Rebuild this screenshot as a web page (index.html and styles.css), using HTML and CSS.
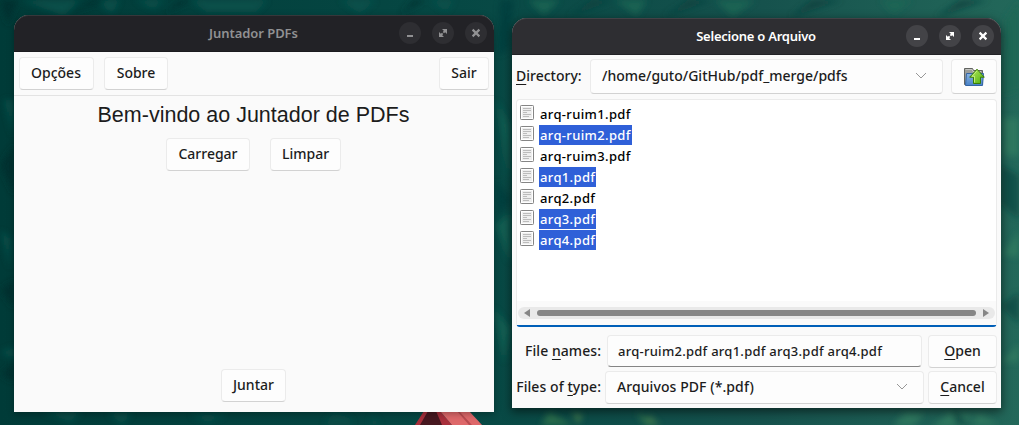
FILE: index.html
```html
<!DOCTYPE html>
<html lang="pt-BR">
<head>
<meta charset="utf-8">
<title>Juntador PDFs</title>
<link rel="stylesheet" href="styles.css">
</head>
<body>
<svg class="symbols" width="0" height="0">
  <defs>
    <linearGradient id="g-folder" x1="0" y1="0" x2="0" y2="1"><stop offset="0" stop-color="#88b3e2"/><stop offset="1" stop-color="#4a83c8"/></linearGradient>
    <linearGradient id="g-arrow" x1="0" y1="0" x2="1" y2="1"><stop offset="0" stop-color="#b6ec61"/><stop offset="1" stop-color="#4fae0b"/></linearGradient>
    <symbol id="min" viewBox="0 0 22 22"><path d="M8 13h6v2H8z" fill="currentColor"/></symbol>
    <symbol id="max" viewBox="0 0 22 22"><path d="M10 7h5v5l-1.800-1.800L12 11.200 10.800 10 11.800 8.800zM7 10v5h5l-1.800-1.800L11.200 12 10 10.800 8.800 11.800z" fill="currentColor"/></symbol>
    <symbol id="close" viewBox="0 0 22 22"><path d="M7.600 7.600l6.800 6.800M14.400 7.600l-6.800 6.800" stroke="currentColor" stroke-width="2.200"/></symbol>
    <symbol id="doc" viewBox="0 0 14 15"><rect x=".5" y=".5" width="13" height="14" rx=".8" fill="#fff" stroke="#858585"/><rect x="2" y="2" width="10" height="11" fill="#eee"/><path d="M3 3.500h8M3 5.500h8M3 7.500h4M3 9.500h8M3 11.500h6" stroke="#bcbcbc"/></symbol>
    <symbol id="chev" viewBox="0 0 12 7"><path d="M1 1l5 5 5-5" fill="none" stroke="#979797"/></symbol>
  </defs>
</svg>
<svg class="wallpaper" viewBox="0 0 1019 425" preserveAspectRatio="none">
  <defs>
    <linearGradient id="base"><stop offset="0" stop-color="#003b38"/><stop offset=".45" stop-color="#064844"/><stop offset=".75" stop-color="#16524d"/><stop offset="1" stop-color="#23685a"/></linearGradient>
    <filter id="soft" x="-5%" y="-5%" width="110%" height="110%"><feGaussianBlur stdDeviation="3"/></filter>
  </defs>
  <rect width="1019" height="425" fill="url(#base)"/>
  <g filter="url(#soft)" opacity=".8">
    <path fill="#08534d" d="M20 0h60L64 16zM96 0h24l-8 14zM135 0h30l-12 9zM190 0h78l-12 12h-50zM340 0h36l-16 14zM430 0h24l-8 12z"/>
    <path fill="#002f2d" d="M0 0h18L8 25zM68 14L92 0h16zM164 14l16-14h12zM400 14l14-14h12zM0 165l14-20v50zM0 290l14-10v28zM0 374l14-12v20z"/>
    <path fill="#07534d" d="M4 100h9v36zM0 230l10 8v30zM0 352l14-5v12zM42 412h40l-12 10zM108 413h24l-10 12zM190 415h36l-18 8z"/>
    <path fill="#126556" d="M497 100l12 25v60zM496 225l14-12v50zM494 308l16 20-6 35z"/>
    <path fill="#033d3c" d="M500 0h14l-6 50-10 5zM496 180l15 20-12 16z"/>
    <path fill="#1e6754" d="M528 0h32l-16 15zM615 0h32l-10 16zM715 0h40l-22 17zM880 0h32l-18 14zM1005 20l14-20v90l-16 6z"/>
    <path fill="#0c403e" d="M568 17l24-17h22zM664 17l24-17h24zM790 17l22-17h30zM936 17l24-17h28z"/>
    <path fill="#317b60" d="M1002 118h17v38h-15zM1002 255l17-24v26zM1001 362l18-18v18zM905 412l20 2-12 12h-20zM950 412l24 3-12 12h-30zM978 412l20 13h-25z"/>
    <path fill="#104b45" d="M1001 165l18 10v45l-18-16zM1001 306l18-14v32zM952 407l18 18h-14z"/>
    <path fill="#33764e" d="M549 412l24 13h-32zM636 412l26 13h-18z"/>
    <path fill="#49804d" d="M572 412l11 3-5 10zM649 414l10 11h-12z"/>
    <path fill="#075049" d="M332 414c16 0 25 8 18 11h-26zM372 413l9 12h-10z"/>
  </g>
  <path fill="#a82f3b" d="M424 411h16l12 14h-37z"/>
  <path fill="#471820" d="M428 411h8l6 14h-22z"/>
  <path fill="#de686a" d="M440 411h29l13 14h-30z"/>
  <path fill="#b94b50" d="M457 411h2l13 14h-3z"/>
</svg>

<section class="window merger">
  <header class="titlebar"><h1 class="caption cap-a">Juntador PDFs</h1>
    <div class="controls"><svg class="ctl"><use href="#min"/></svg><svg class="ctl"><use href="#max"/></svg><svg class="ctl"><use href="#close"/></svg></div>
  </header>
  <nav class="toolbar"><button class="btn b-op">Opções</button><button class="btn b-so">Sobre</button><button class="btn b-sa">Sair</button></nav>
  <main class="merger-body">
    <h2 class="welcome">Bem-vindo ao Juntador de PDFs</h2>
    <div class="actions"><button class="btn b-ca">Carregar</button><button class="btn b-li">Limpar</button></div>
    <button class="btn b-ju">Juntar</button>
  </main>
</section>

<section class="window dialog">
  <header class="titlebar"><h1 class="caption cap-b">Selecione o Arquivo</h1>
    <div class="controls"><svg class="ctl"><use href="#min"/></svg><svg class="ctl"><use href="#max"/></svg><svg class="ctl"><use href="#close"/></svg></div>
  </header>
  <div class="dialog-body">
    <div class="dir-row">
      <label class="lab"><u>D</u>irectory:</label>
      <div class="box combo"><span class="t-path">/home/guto/GitHub/pdf_merge/pdfs</span><svg class="chev"><use href="#chev"/></svg></div>
      <button class="btn up"><svg width="22" height="20" viewBox="0 0 22 20">
        <path d="M1.500 17.500V1.500h8l1 2h9v14z" fill="#9b9d99" stroke="#626461"/>
        <path d="M2.500 2.500h6.500l1 2h8" fill="none" stroke="#c5c6c3"/>
        <path d="M3.500 6.500h17l-1 12H2.500z" fill="url(#g-folder)" stroke="#3465a4"/>
        <path d="M14 2.200l7.300 8h-3.800v6.300h-7v-6.300H6.700z" fill="url(#g-arrow)" stroke="#387c05"/>
        <path d="M14 3.900l-5 5.400h2.500v6.200" fill="none" stroke="#d1f58e" stroke-width=".8"/>
      </svg></button>
    </div>
    <div class="list">
      <ul class="files">
        <li><svg class="doc"><use href="#doc"/></svg><span>arq-ruim1.pdf</span></li>
        <li><svg class="doc"><use href="#doc"/></svg><span class="sel">arq-ruim2.pdf</span></li>
        <li><svg class="doc"><use href="#doc"/></svg><span>arq-ruim3.pdf</span></li>
        <li><svg class="doc"><use href="#doc"/></svg><span class="sel">arq1.pdf</span></li>
        <li><svg class="doc"><use href="#doc"/></svg><span>arq2.pdf</span></li>
        <li><svg class="doc"><use href="#doc"/></svg><span class="sel">arq3.pdf</span></li>
        <li><svg class="doc"><use href="#doc"/></svg><span class="sel">arq4.pdf</span></li>
      </ul>
      <div class="scroll"><div class="trough">
        <svg width="6" height="8"><path d="M6 0v8L0 4z" fill="#868686"/></svg><div class="thumb"></div><svg width="6" height="8"><path d="M0 0v8l6-4z" fill="#868686"/></svg>
      </div></div>
    </div>
    <div class="form">
      <label class="lab">File <u>n</u>ames:</label><div class="box entry"><span class="t-entry">arq-ruim2.pdf arq1.pdf arq3.pdf arq4.pdf</span></div><button class="btn b-open"><span><u>O</u>pen</span></button>
      <label class="lab">Files of <u>t</u>ype:</label><div class="box combo type"><span class="t-type">Arquivos PDF (*.pdf)</span><svg class="chev"><use href="#chev"/></svg></div><button class="btn b-cancel"><span><u>C</u>ancel</span></button>
    </div>
  </div>
</section>
</body>
</html>
```
FILE: styles.css
```css
* { box-sizing: border-box; }
body { margin: 0; width: 1019px; height: 425px; overflow: hidden; position: relative; background: #064844; font: 500 14px/19px "Noto Sans", sans-serif; color: #1c1c1c; }
.symbols { position: absolute; }
.wallpaper { position: absolute; inset: 0; width: 1019px; height: 425px; }
.window { position: absolute; display: flex; flex-direction: column; background: #fafafa; border-radius: 15px 15px 0 0; }
.merger { left: 14px; top: 15px; width: 480px; height: 397px; box-shadow: 0 2px 7px rgba(0,0,0,.3); }
.dialog { left: 512px; top: 18px; width: 489px; height: 390px; box-shadow: 0 3px 10px 1px rgba(0,0,0,.5); }

.titlebar { height: 37px; flex: none; display: grid; grid-template-columns: 100px 1fr 100px; align-items: center; border-radius: 15px 15px 0 0; background: #222226; color: #919193; box-shadow: inset 0 1px #37373a, inset 0 -1px #1b1b1f; }
.dialog .titlebar { background: #2e2e32; color: #fff; box-shadow: inset 0 1px #424246, inset 0 -1px #222226; }
.caption { grid-column: 2; margin: 0; padding: 0 1px 2px 0; font-size: 13px; line-height: 18px; font-weight: 600; text-align: center; white-space: nowrap; }
.cap-a { letter-spacing: -.06px; }
.cap-b { letter-spacing: -.25px; }
.controls { grid-column: 3; display: flex; gap: 11px; justify-content: flex-end; padding-right: 7px; }
.ctl { width: 22px; height: 22px; margin-bottom: 2px; border-radius: 50%; background: #2e2e32; }
.dialog .ctl { background: #434347; }

.btn { font: inherit; color: inherit; height: 33px; padding: 0 0 2px; background: #fdfdfd; border: 1px solid #ebebeb; border-bottom-color: #d2d2d2; border-radius: 4px; white-space: nowrap; display: flex; align-items: center; justify-content: center; }
.toolbar { height: 44px; flex: none; display: flex; gap: 10px; padding: 5px; border-bottom: 1px solid #e3e3e3; }
.b-op { width: 75px; padding-right: 1px; } .b-so { width: 64px; } .b-sa { width: 50px; margin-left: auto; }
.merger-body { flex: 1; display: flex; flex-direction: column; align-items: center; padding: 6px 1px 10px 0; }
.welcome { margin: 0; font: 400 21.5px/26px "Liberation Sans", sans-serif; white-space: nowrap; }
.actions { display: flex; gap: 20px; margin: 10px 0 auto; }
.b-ca { width: 84px; } .b-li { width: 71px; } .b-ju { width: 65px; }

.dialog-body { padding: 4px 4px 0; display: flex; flex-direction: column; }
.lab { white-space: nowrap; padding-bottom: 2px; }
u { text-decoration: underline; text-decoration-skip-ink: none; text-underline-offset: 3px; text-decoration-thickness: 1px; }
.dir-row { display: grid; grid-template-columns: 66px 353px 46px; column-gap: 8px; align-items: center; }
.box { height: 33px; display: flex; align-items: center; white-space: nowrap; background: #fdfdfd; border: 1px solid #ebebeb; border-bottom-color: #d2d2d2; border-radius: 4px; padding: 0 15px 0 11px; }
.combo span { padding-bottom: 2px; }
.dir-row .box, .up { height: 35px; }
.up { padding: 0; }
.chev { width: 12px; height: 7px; margin: 0 0 2px auto; }
.list { height: 228px; margin-top: 5px; display: flex; flex-direction: column; justify-content: space-between; background: #fff; border: 1px solid #ebebeb; border-bottom: 2px solid #005fb8; border-radius: 4px; }
.files { list-style: none; margin: 0; padding: 4px 0 0 3px; font-size: 13px; line-height: 20px; letter-spacing: .36px; color: #000; }
.files li { height: 21px; display: flex; gap: 5px; }
.files span { height: 20px; padding: 0 1px; }
.doc { width: 14px; height: 15px; margin-top: 1px; }
.files .sel { background: #2f60d8; color: #fff; }
.scroll { height: 24px; padding: 6px 1px; background: #fafafa; }
.trough { height: 12px; border-radius: 6px; background: #e9e9e9; display: flex; align-items: center; padding: 0 6px; }
.thumb { flex: 1; height: 6px; border-radius: 3px; background: #868686; margin: 0 7px; }
.form { display: grid; grid-template-columns: 85px 1fr 69px; row-gap: 3px; column-gap: 4px; margin-top: 8px; align-items: center; }
.form .lab { text-align: right; letter-spacing: .06px; }
.entry { height: 32px; margin: 0 2px; border-bottom-color: #858585; padding-left: 10px; font-size: 13px; letter-spacing: .26px; align-self: start; }
.t-type { letter-spacing: .08px; }
```
